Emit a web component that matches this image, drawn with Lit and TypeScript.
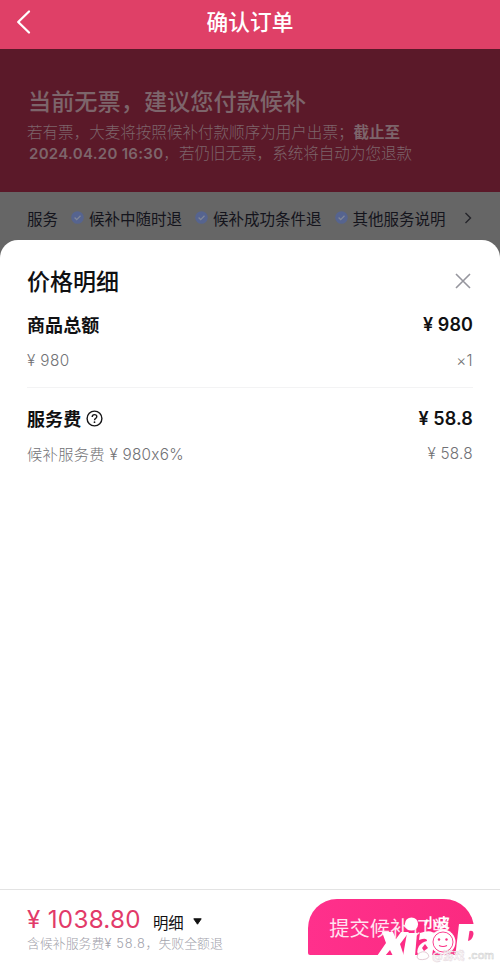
import { LitElement, html, css, svg } from "lit";
import { customElement, property } from "lit/decorators.js";

@customElement("service-tag")
class ServiceTag extends LitElement {
  @property() label = "";
  static styles = css`
    :host { display: flex; align-items: center; gap: 5px; white-space: nowrap; }
    svg { width: 13px; height: 13px; display: block; }
  `;
  render() {
    return html`<svg viewBox="0 0 13 13">
        <circle cx="6.5" cy="6.5" r="6.3" fill="#56648f" />
        <path d="M3.6 6.5l2.1 2.1 3.8-3.8" fill="none" stroke="#808799" stroke-width="1.3" />
      </svg><span>${this.label}</span>`;
  }
}

@customElement("price-row")
class PriceRow extends LitElement {
  @property() label = "";
  @property() value = "";
  static styles = css`
    :host { display: flex; justify-content: space-between; align-items: center; white-space: nowrap; }
    .label { display: flex; align-items: center; gap: 5px; }
  `;
  render() {
    return html`<span class="label"><span>${this.label}</span><slot></slot></span><span>${this.value}</span>`;
  }
}

@customElement("app-root")
class AppRoot extends LitElement {
  static styles = css`
    :host {
      display: flex; flex-direction: column; width: 500px; height: 965px;
      overflow: hidden; background: #666; color: #101012;
      font-family: Inter, "Noto Sans CJK SC", sans-serif;
    }
    * { box-sizing: border-box; }
    svg { display: block; }
    header {
      height: 49px; flex: none; background: #df4067; color: #fff;
      display: grid; grid-template-columns: 60px 1fr 60px; align-items: center;
      padding-bottom: 5px;
    }
    header svg { width: 16px; height: 26px; margin-left: 16px; }
    .title { text-align: center; font-size: 21.7px; font-weight: 500; line-height: 30px; }
    .banner {
      height: 143px; flex: none; background: #5b1929; color: #7d656b;
      padding: 37px 0 0 27px; white-space: nowrap;
    }
    .banner-title { font-size: 23.2px; font-weight: 500; line-height: 32px; margin-left: 1px; }
    .banner-text { font-size: 15.55px; line-height: 21px; margin-top: 4px; font-weight: 300; }
    .banner-text b { font-weight: 600; }
    .banner-text .date { margin-left: 2px; font-size: 15px; letter-spacing: .3px; }
    .services {
      height: 48px; flex: none; display: flex; align-items: center; padding: 3px 0 0 27px;
      font-size: 15.5px; color: #14141c;
    }
    .services service-tag { margin-left: 13px; }
    .services svg { width: 8px; height: 12px; margin-left: 18px; }
    .sheet {
      flex: 1; background: #fff; border-radius: 18px 18px 0 0;
      padding: 24px 27px 0; font-size: 15.3px;
    }
    .sheet-head { display: flex; justify-content: space-between; align-items: center; height: 34px; }
    .sheet-title { font-size: 23px; font-weight: 500; margin-top: -3px; }
    .sheet-head svg { width: 16px; height: 16px; margin-right: 2px; }
    .strong { height: 26px; font-size: 18px; font-weight: 600; color: #101012; letter-spacing: .1px; }
    .weak { height: 22px; color: #717175; font-weight: 300; letter-spacing: .1px; }
    .goods { margin-top: 13px; }
    .goods-detail { margin-top: 12px; letter-spacing: .4px; }
    .rule { height: 1px; background: #f3f3f4; margin: 16px 0 17px; }
    .fee-detail { margin-top: 11px; letter-spacing: .27px; }
    .help { width: 17px; height: 17px; }
    footer {
      height: 76px; flex: none; background: #fff; border-top: 1px solid #e3e3e3;
      display: flex; justify-content: space-between; padding: 9px 26px 0 27px; position: relative;
    }
    .sum { display: flex; align-items: center; height: 40px; white-space: nowrap; }
    .amount { color: #e23a69; font-size: 24.2px; letter-spacing: .3px; }
    .more { font-size: 15.4px; margin-left: 12px; padding-top: 5px; }
    .sum svg { width: 9px; height: 7px; margin: 4px 0 0 9px; }
    .note { font-size: 12.85px; line-height: 18px; color: #a2a2ab; font-weight: 300; margin-top: -4px; white-space: nowrap; letter-spacing: .05px; }
    .note .fee { letter-spacing: .7px; }
    .submit {
      width: 166px; height: 56px; border: 0; padding: 0 2px 0 0; border-radius: 29px 30px 0 2px;
      background: linear-gradient(90deg, #ff308c, #fb2a80); color: #ffe3f0;
      font-family: inherit; font-size: 20.3px; font-weight: 400; white-space: nowrap;
    }
    .mark { position: absolute; left: 370px; top: 15px; width: 130px; height: 60px; }
    .logo-cn { font: 700 13px "Noto Sans CJK SC", sans-serif; }
    .weibo { font: 500 11px Inter, "Noto Sans CJK SC", sans-serif; }
  `;

  private watermark() {
    return svg`
      <g fill="#fff">
        <path d="M12 27h11l3 7 5-7h8l-9 12 4 12H23l-3-6-5 6H7l9-13z" />
        <path d="M37 28h10l-2 23H33z" />
        <circle cx="41.5" cy="19" r="6.6" />
        <path d="M50 28q14-5 15 4l-3 19H50q-5-3-1-10 3-4 8-5 0-4-8-1z" />
        <circle cx="73" cy="37" r="12.5" />
        <path d="M89 19h41v34H85z" />
      </g>
      <path d="M55 39l-3 4 2 3 4-3z" fill="#f92f84" />
      <path d="M99.500 26q4-1 4 3-1 6-5.500 7z" fill="#f92f84" />
      <circle cx="73" cy="37" r="10" fill="none" stroke="#f92f84" stroke-width=".9" />
      <circle cx="69" cy="34.5" r="1.2" fill="#f92f84" />
      <circle cx="76.5" cy="34.5" r="1.2" fill="#f92f84" />
      <path d="M69 40.500q4 2 8 0" fill="none" stroke="#f92f84" stroke-width="1.1" />
      <text class="logo-cn" x="54" y="22" fill="#fff">小皮</text>
      <text class="weibo" x="98" y="54" fill="#f4f4f4" stroke="#d0d0d0" stroke-width=".5">.com</text>
      <text class="weibo" x="62" y="55" fill="#fff" stroke="#e3d3da" stroke-width=".4">@游戏</text>
      <path d="M48 49q5-4 9-1 4 4-1 6-8 2-9-2z" fill="#fff" stroke="#d5b5c2" stroke-width=".7" />
    `;
  }

  render() {
    return html`
      <header>
        <svg viewBox="0 0 16 26"><path d="M13 2.5L2.2 13 13 23.5" fill="none" stroke="#fff" stroke-width="2.3" stroke-linecap="round" stroke-linejoin="round" /></svg>
        <div class="title">确认订单</div>
      </header>
      <section class="banner">
        <div class="banner-title">当前无票，建议您付款候补</div>
        <div class="banner-text">若有票，大麦将按照候补付款顺序为用户出票；<b>截止至</b><br /><b class="date">2024.04.20 16:30</b>，若仍旧无票，系统将自动为您退款</div>
      </section>
      <section class="services">
        <span>服务</span>
        <service-tag label="候补中随时退"></service-tag>
        <service-tag label="候补成功条件退"></service-tag>
        <service-tag label="其他服务说明"></service-tag>
        <svg viewBox="0 0 8 12"><path d="M1.5 1l5 5-5 5" fill="none" stroke="#25252b" stroke-width="1.4" /></svg>
      </section>
      <main class="sheet">
        <div class="sheet-head">
          <span class="sheet-title">价格明细</span>
          <svg viewBox="0 0 16 16"><path d="M1 1l14 14M15 1L1 15" stroke="#96969e" stroke-width="1.6" /></svg>
        </div>
        <price-row class="strong goods" label="商品总额" value="¥ 980"></price-row>
        <price-row class="weak goods-detail" label="¥ 980" value="×1"></price-row>
        <div class="rule"></div>
        <price-row class="strong" label="服务费" value="¥ 58.8">
          <svg class="help" viewBox="0 0 17 17">
            <circle cx="8.5" cy="8.5" r="7.4" fill="none" stroke="#161618" stroke-width="1.4" />
            <path d="M6.2 6.9q0-2.3 2.3-2.3t2.3 2q0 1.1-1.1 1.8T8.5 10.2" fill="none" stroke="#161618" stroke-width="1.4" />
            <circle cx="8.5" cy="12.2" r=".9" fill="#161618" />
          </svg>
        </price-row>
        <price-row class="weak fee-detail" label="候补服务费 ¥ 980x6%" value="¥ 58.8"></price-row>
      </main>
      <footer>
        <div>
          <div class="sum">
            <span class="amount">¥ 1038.80</span>
            <span class="more">明细</span>
            <svg viewBox="0 0 9 7"><path d="M.8.8h7.4L4.5 6.2z" fill="#111" stroke="#111" stroke-linejoin="round" /></svg>
          </div>
          <div class="note">含候补服务费<span class="fee">¥ 58.8</span>，失败全额退</div>
        </div>
        <button class="submit">提交候补订单</button>
        <svg class="mark" viewBox="0 0 130 60">${this.watermark()}</svg>
      </footer>
    `;
  }
}
